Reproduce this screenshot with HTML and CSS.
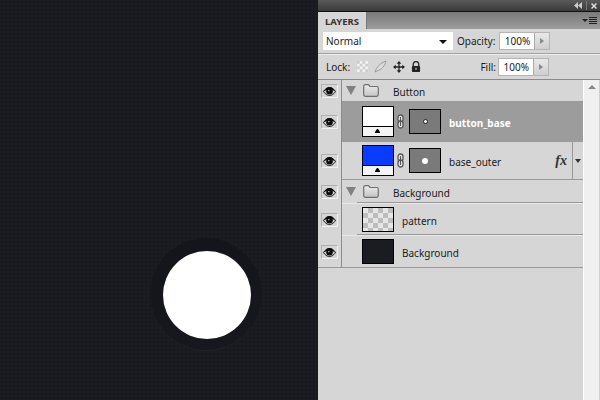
FILE: index.html
```html
<!DOCTYPE html>
<html lang="en">
<head>
    <meta charset="UTF-8">
    <title>Layers panel</title>
    <link rel="stylesheet" href="styles.css">
</head>
<body>
    <svg class="defs" width="0" height="0">
        <defs>
            <linearGradient id="folder-fill" x1="0" y1="0" x2="0" y2="1">
                <stop offset="0" stop-color="#ececec"/>
                <stop offset="1" stop-color="#c4c4c4"/>
            </linearGradient>
        </defs>
        <symbol id="eye" viewBox="0 0 13 9">
            <path d="M0.5 4.5C3 1 5 0.5 6.5 0.5S10 1 12.500 4.500C10 8 8 8.500 6.500 8.500S3 8 0.500 4.500Z" fill="#cfcfcf" stroke="#111"/>
            <circle cx="6.500" cy="4.300" r="3.300" fill="#0c0c0c"/>
            <path d="M0.500 4.500C3 .8 5 0 6.500 0S10 .8 12.500 4.500L10.500 3.500C9 2 4 2 2.500 3.500Z" fill="#0c0c0c"/>
            <rect x="5" y="3" width="1.500" height="1.200" fill="#aaa"/>
        </symbol>
        <symbol id="folder" viewBox="0 0 16 13">
            <path d="M.7 2.500Q.7 .7 2.500 .7H5.500L7 2.500H14Q15.300 2.500 15.300 4V10.500Q15.300 12.300 13.500 12.300H2.500Q.7 12.300 .7 10.500Z" fill="url(#folder-fill)" stroke="#6e6e6e" stroke-width="1.200"/>
        </symbol>
        <symbol id="link" viewBox="0 0 7 15">
            <rect x="1" y="1" width="5" height="7" rx="2.500" fill="#eee" stroke="#555" stroke-width="1.300"/>
            <rect x="1" y="7" width="5" height="7" rx="2.500" fill="#eee" stroke="#555" stroke-width="1.300"/>
            <path d="M3.500 3V12" stroke="#555" stroke-width="1.200"/>
        </symbol>
    </svg>

    <main class="canvas">
        <div class="ring"><div class="disc"></div></div>
    </main>

    <aside class="panel">
        <div class="titlebar">
            <svg width="8" height="7" viewBox="0 0 8 7"><path d="M4 0V7L0 3.500ZM8 0V7L4 3.500Z" fill="#ccc"/></svg>
            <span class="sep"></span>
            <svg width="6" height="6" viewBox="0 0 6 6"><path d="M.5 .5L5.500 5.500M5.500 .5L.5 5.500" stroke="#ddd" stroke-width="1.500"/></svg>
        </div>
        <div class="tabs">
            <div class="tab">LAYERS</div>
            <div class="menu-btn"><span class="menu-arrow"></span><span class="menu-lines"></span></div>
        </div>

        <div class="opt-row blend-row">
            <div class="blend"><span>Normal</span><span class="down"></span></div>
            <span class="lbl lbl-opacity">Opacity:</span>
            <div class="num"><span class="val">100%</span><span class="step"></span></div>
        </div>
        <div class="opt-row lock-row">
            <span class="lbl">Lock:</span>
            <svg class="lock-ico" width="11" height="11" viewBox="0 0 12 12">
                <rect width="12" height="12" fill="#f2f2f2"/>
                <path d="M0 0h3v3H0zM6 0h3v3H6zM3 3h3v3H3zM9 3h3v3H9zM0 6h3v3H0zM6 6h3v3H6zM3 9h3v3H3zM9 9h3v3H9z" fill="#cdcdcd"/>
            </svg>
            <svg class="lock-ico" width="13" height="13" viewBox="0 0 13 13">
                <path d="M1 12C2 8 6 3 12 1C11 6 7 10 3 11Z" fill="#ddd" stroke="#999"/>
            </svg>
            <svg class="lock-ico" width="12" height="12" viewBox="0 0 13 13">
                <path d="M6.500 0L9 3H7.200V5.800H10V4L13 6.500L10 9V7.200H7.200V10H9L6.500 13L4 10H5.800V7.200H3V9L0 6.500L3 4V5.800H5.800V3H4Z" fill="#222"/>
            </svg>
            <svg class="lock-ico" width="10" height="11" viewBox="0 0 11 12">
                <path d="M2.500 6V3.500a3 3 0 0 1 6 0V6" fill="none" stroke="#333" stroke-width="1.600"/>
                <rect x="1" y="5.500" width="9" height="6.500" rx="1" fill="#222"/>
                <rect x="4.500" y="7.500" width="2" height="2" fill="#999"/>
            </svg>
            <span class="lbl lbl-fill">Fill:</span>
            <div class="num"><span class="val">100%</span><span class="step"></span></div>
        </div>

        <div class="layers-wrap">
            <div class="layers">
                <div class="row first">
                    <div class="eye"><svg width="13" height="9"><use href="#eye"/></svg></div>
                    <div class="row-main group">
                        <span class="twirl"></span>
                        <svg class="folder" width="16" height="13"><use href="#folder"/></svg>
                        <span class="name">Button</span>
                    </div>
                </div>
                <div class="row tall sel">
                    <div class="eye"><svg width="13" height="9"><use href="#eye"/></svg></div>
                    <div class="row-main indent">
                        <div class="thumb white"><div class="thumb-foot"><span></span></div></div>
                        <svg class="link" width="7" height="15"><use href="#link"/></svg>
                        <div class="mask"><span class="dot small"></span></div>
                        <span class="name bold">button_base</span>
                    </div>
                </div>
                <div class="row tall2">
                    <div class="eye"><svg width="13" height="9"><use href="#eye"/></svg></div>
                    <div class="row-main indent">
                        <div class="thumb blue"><div class="thumb-foot"><span></span></div></div>
                        <svg class="link" width="7" height="15"><use href="#link"/></svg>
                        <div class="mask"><span class="dot"></span></div>
                        <span class="name">base_outer</span>
                        <span class="fx">fx</span>
                        <span class="fx-arrow"></span>
                    </div>
                </div>
                <div class="row second">
                    <div class="eye"><svg width="13" height="9"><use href="#eye"/></svg></div>
                    <div class="row-main group inset-line">
                        <span class="twirl"></span>
                        <svg class="folder" width="16" height="13"><use href="#folder"/></svg>
                        <span class="name">Background</span>
                    </div>
                </div>
                <div class="row short">
                    <div class="eye"><svg width="13" height="9"><use href="#eye"/></svg></div>
                    <div class="row-main indent inset-line">
                        <div class="thumb plain checks"></div>
                        <span class="name">pattern</span>
                    </div>
                </div>
                <div class="row short last">
                    <div class="eye"><svg width="13" height="9"><use href="#eye"/></svg></div>
                    <div class="row-main indent">
                        <div class="thumb plain dark"></div>
                        <span class="name">Background</span>
                    </div>
                </div>
            </div>
            <div class="scrollbar"><span class="up"></span></div>
        </div>
    </aside>
</body>
</html>
```

FILE: styles.css
```css
html, body {
    margin: 0;
    height: 100%;
}
body {
    display: flex;
    width: 600px;
    height: 400px;
    overflow: hidden;
    font-family: "Noto Sans", sans-serif;
    font-size: 10px;
    color: #1a1a1a;
    background: #1b1c22;
}
.defs {
    position: absolute;
}

/* canvas */
.canvas {
    width: 318px;
    height: 400px;
    box-sizing: border-box;
    padding: 238px 0 0 150px;
    background-color: #1b1c22;
    background-image: radial-gradient(rgba(0,0,0,0.14) 1px, transparent 1px);
    background-size: 4px 4px;
}
.ring {
    width: 112px;
    height: 112px;
    display: flex;
    align-items: center;
    justify-content: center;
    border-radius: 50%;
    background: linear-gradient(#14151a, #17181d);
    box-shadow: 0 1px 0 #212228;
}
.disc {
    width: 88px;
    height: 88px;
    margin: 2px 0 0 2px;
    border-radius: 50%;
    background: #fff;
}

/* panel */
.panel {
    width: 282px;
    height: 400px;
    display: flex;
    flex-direction: column;
    background: #d6d6d6;
}
.titlebar {
    height: 11px;
    flex: none;
    display: flex;
    align-items: center;
    justify-content: flex-end;
    gap: 4px;
    padding-right: 3px;
    background: linear-gradient(#5a5a5a, #3a3a3a);
    border-bottom: 1px solid #111;
}
.sep {
    width: 1px;
    height: 9px;
    background: #777;
}
.tabs {
    height: 17px;
    flex: none;
    display: flex;
    justify-content: space-between;
    background: linear-gradient(#7a7a7a, #9c9c9c);
}
.tab {
    width: 49px;
    box-sizing: border-box;
    padding: 3px 0 0 7px;
    font-size: 9.500px;
    font-weight: bold;
    line-height: 13px;
    color: #333;
    background: #d6d6d6;
    border-right: 1px solid #777;
}
.menu-btn {
    display: flex;
    align-items: center;
    gap: 1px;
    padding-right: 3px;
}
.menu-arrow {
    border: 3px solid transparent;
    border-top: 3px solid #222;
    border-bottom: 0;
}
.menu-lines {
    width: 8px;
    height: 7px;
    background: repeating-linear-gradient(#222 0 1px, transparent 1px 2px);
}

.opt-row {
    display: flex;
    align-items: center;
    flex: none;
    box-sizing: border-box;
    border-bottom: 1px solid #a2a2a2;
    box-shadow: 0 1px 0 #eee;
}
.blend-row {
    height: 25px;
    padding-left: 5px;
}
.lock-row {
    height: 26px;
    padding-left: 8px;
    border-bottom-color: #8a8a8a;
    box-shadow: none;
}
.blend {
    width: 130px;
    height: 18px;
    box-sizing: border-box;
    display: flex;
    align-items: center;
    justify-content: space-between;
    padding: 0 5px 0 3px;
    background: #fff;
}
.down {
    border: 4px solid transparent;
    border-top: 4px solid #111;
    border-bottom: 0;
    margin: 2px 1px 0 0;
}
.lbl-opacity {
    margin: 0 4px;
}
.lock-row .num {
    margin-right: 51px;
}
.num {
    width: 51px;
    height: 18px;
    box-sizing: border-box;
    display: flex;
    align-items: center;
    border: 1px solid #b5b5b5;
    background: #fff;
}
.val {
    flex: 1;
    text-align: right;
    padding-right: 4px;
}
.step {
    width: 15px;
    height: 16px;
    box-sizing: border-box;
    border-left: 1px solid #aaa;
    background: linear-gradient(#e8e8e8, #cfcfcf);
    position: relative;
}
.step::after {
    content: "";
    position: absolute;
    left: 5px;
    top: 5px;
    border: 3px solid transparent;
    border-left: 4px solid #888;
    border-right: 0;
}
.lock-ico {
    margin-left: 6px;
    flex: none;
}
.lock-row .lbl {
    margin-right: 1px;
}
.lock-row .lbl-fill {
    margin: 0 2px 0 auto;
}

/* layers list */
.layers-wrap {
    flex: 1;
    display: flex;
    min-height: 0;
}
.layers {
    width: 265px;
    display: flex;
    flex-direction: column;
}
.row {
    display: flex;
    flex: none;
}
.first { height: 22px; }
.second { height: 24px; }
.tall { height: 40px; }
.tall2 { height: 38px; }
.short { height: 32px; }
.eye {
    width: 24px;
    flex: none;
    box-sizing: border-box;
    display: flex;
    align-items: center;
    justify-content: center;
    border-right: 1px solid #8c8c8c;
    background: #d6d6d6;
}
.eye svg {
    display: block;
    padding: 2px 1px 1px;
    border: 1px solid #b0b0b0;
    border-right-color: #f2f2f2;
    border-bottom-color: #f2f2f2;
}
.last .eye {
    border-bottom: 1px solid #999;
}
.row-main {
    flex: 1;
    display: flex;
    align-items: center;
    border-bottom: 1px solid #999;
}
.inset-line {
    border-bottom-color: #e8e8e8;
    background: linear-gradient(#999, #999) 15px 100% / 100% 1px no-repeat;
}
.indent {
    padding-left: 20px;
}
.twirl {
    border: 5px solid transparent;
    border-top: 9px solid #808080;
    border-bottom: 0;
    margin: 0 7px 0 4px;
}
.folder {
    flex: none;
}
.group .name {
    margin-left: 14px;
}
.thumb {
    width: 32px;
    height: 31px;
    box-sizing: border-box;
    border: 1px solid #000;
    display: flex;
    flex-direction: column;
    justify-content: flex-end;
    flex: none;
}
.white { background: #fff; }
.blue { background: #0a3cff; }
.thumb-foot {
    height: 9px;
    background: #f4f4f4;
    border-top: 1px solid #000;
    position: relative;
}
.thumb-foot span {
    position: absolute;
    left: 12px;
    top: 2px;
    width: 5px;
    height: 3px;
    box-sizing: border-box;
    border: 2px solid transparent;
    border-bottom: 3px solid #000;
    border-top: 0;
    box-shadow: 0 1px 0 #000;
}
.plain {
    height: 25px;
}
.checks {
    background-color: #e6e6e6;
    background-image:
        linear-gradient(45deg, #bdbdbd 25%, transparent 25%, transparent 75%, #bdbdbd 75%),
        linear-gradient(45deg, #bdbdbd 25%, transparent 25%, transparent 75%, #bdbdbd 75%);
    background-size: 10px 10px;
    background-position: 0 0, 5px 5px;
}
.dark { background: #1b1c22; }
.link {
    margin: 0 5px 0 3px;
    flex: none;
}
.mask {
    width: 32px;
    height: 25px;
    box-sizing: border-box;
    border: 1px solid #000;
    background: #7a7a7a;
    display: flex;
    align-items: center;
    justify-content: center;
    flex: none;
}
.dot {
    width: 6px;
    height: 6px;
    border-radius: 50%;
    background: #fff;
}
.dot.small {
    width: 3px;
    height: 3px;
    border: 1px solid #222;
}
.name {
    margin: 2px 0 0 8px;
    white-space: nowrap;
}
.bold {
    font-weight: bold;
    color: #fff;
}
.sel .row-main {
    background: #9c9c9c;
    border-bottom-color: #9c9c9c;
}
.fx {
    margin-left: auto;
    margin-right: 5px;
    font-family: "Liberation Serif", serif;
    font-style: italic;
    font-weight: bold;
    font-size: 14px;
    color: #333;
}
.fx-arrow {
    height: 100%;
    width: 11px;
    box-sizing: border-box;
    border-left: 1px solid #999;
    display: flex;
    align-items: center;
    justify-content: center;
}
.fx-arrow::after {
    content: "";
    border: 3px solid transparent;
    border-top: 4px solid #333;
    border-bottom: 0;
}
.scrollbar {
    width: 15px;
    flex: none;
    border-left: 1px solid #fff;
    background: #f0f0f0;
    border-right: 1px solid #cfcfcf;
    display: flex;
    justify-content: center;
    padding-top: 5px;
}
.up {
    height: 0;
    border: 4px solid transparent;
    border-bottom: 4px solid #888;
    border-top: 0;
}
```
